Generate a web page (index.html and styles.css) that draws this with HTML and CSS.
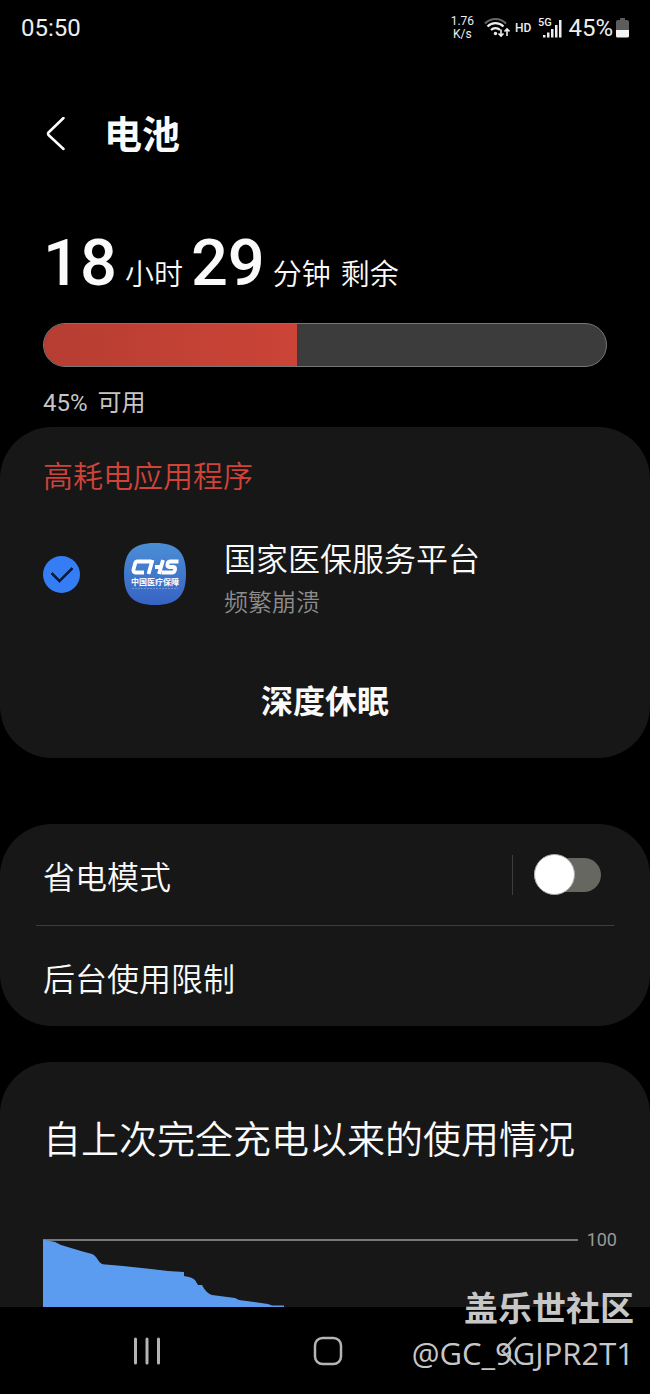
FILE: index.html
```html
<!DOCTYPE html>
<html lang="zh-CN">
<head>
<meta charset="utf-8">
<meta name="viewport" content="width=device-width, initial-scale=1">
<title>电池</title>
<link rel="stylesheet" href="styles.css">
</head>
<body>
<div class="screen">
  <div class="status-bar">
    <span class="clock">05:50</span>
    <div class="status-icons">
      <span class="net-speed"><span>1.76</span><span>K/s</span></span>
      <svg class="wifi" width="26" height="22" viewBox="0 0 26 22" fill="none" stroke="#eee" stroke-width="2.200" aria-hidden="true">
        <path d="M1 6.500C7 .5 16 .5 22 6.500" stroke="#666"/>
        <path d="M3.500 9.500C8 5 15 5 19.500 9.500"/>
        <path d="M7 13C9.500 10.500 13.500 10.500 16 13"/>
        <circle cx="11.500" cy="16.500" r="1.700" fill="#eee" stroke="none"/>
        <path d="M17 12.500v6M14.500 16.500l2.500 2.500 2.500-2.500M23 19v-6M20.500 14.500l2.500-2.500 2.500 2.500" stroke-width="1.600"/>
      </svg>
      <span class="hd">HD</span>
      <svg class="signal" width="25" height="22" viewBox="0 0 25 22" aria-hidden="true">
        <text class="signal-label" x="0" y="9">5G</text>
        <path d="M5 18h2.500v2.500H5zM9 15.500h2.500v5H9zM13 12h2.500v8.500H13zM17 8h2.500v12.500H17zM21 3h2.500v17.500H21z" fill="#eee"/>
      </svg>
      <span class="percent">45%</span>
      <svg class="battery" width="13" height="20" viewBox="0 0 13 20" aria-hidden="true">
        <path d="M4 0h5v2h2q2 0 2 2v8H0V4q0-2 2-2h2z" fill="#5c5c5c"/>
        <path d="M0 12h13v6q0 1.500-1.500 1.500h-10Q0 19.500 0 18z" fill="#f4f4f4"/>
      </svg>
    </div>
  </div>

  <header class="page-header">
    <button class="back" type="button" aria-label="返回">
      <svg width="20" height="36" viewBox="0 0 20 36" fill="none" stroke="#fff" stroke-width="2.500" stroke-linecap="round" stroke-linejoin="round"><path d="M17.500 1 2.500 15.500Q1.500 16.500 2.500 18L17.500 32"/></svg>
    </button>
    <h1>电池</h1>
  </header>

  <main>
    <section class="summary">
      <p class="remaining"><strong>18</strong><span class="unit hours">小时</span><strong>29</strong><span class="unit minutes"><span>分钟</span><span>剩余</span></span></p>
      <div class="level" role="meter" aria-label="电量" aria-valuenow="45" aria-valuemin="0" aria-valuemax="100"><div class="level-fill" style="width:45%"></div></div>
      <p class="available"><span>45%</span><span>可用</span></p>
    </section>

    <section class="card drain">
      <h2 class="drain-title">高耗电应用程序</h2>
      <label class="app">
        <input class="check" type="checkbox" checked>
        <svg class="app-icon" width="64" height="64" viewBox="0 0 64 64" aria-hidden="true">
          <defs><linearGradient id="chs" x1="0" y1="0" x2="0" y2="1"><stop offset="0" stop-color="#4b8ed6"/><stop offset="1" stop-color="#3763c4"/></linearGradient></defs>
          <path d="M32 1C54 1 63 10 63 32S54 63 32 63 1 54 1 32 10 1 32 1z" fill="url(#chs)"/>
          <g fill="none" stroke="#fff" stroke-width="3.800" stroke-linejoin="round">
            <path d="M28 19.500H14.500Q12.500 19.500 12 22L10.500 27.500Q10 30.500 12.500 30.500H21"/>
            <path d="M29.500 18 25.500 32M40 18 36 32M32 25h6"/>
            <path d="M55.500 19.500H47.500Q45 19.500 44.500 22T46 25H50.500Q52.500 25 52 27.700T49.500 30.500H38.500"/>
          </g>
          <text class="app-mark" x="32" y="43" text-anchor="middle">中国医疗保障</text>
          <path d="M9 46.500h46" stroke="#6f97dc" stroke-width="1" stroke-dasharray="2 1"/>
        </svg>
        <span class="app-text"><span class="app-name">国家医保服务平台</span><span class="app-note">频繁崩溃</span></span>
      </label>
      <button class="sleep" type="button">深度休眠</button>
    </section>

    <section class="card modes">
      <div class="row saver">
        <label for="saver">省电模式</label>
        <span class="toggle-wrap"><input class="toggle" id="saver" type="checkbox" role="switch"></span>
      </div>
      <a class="row limits" href="#">后台使用限制</a>
    </section>

    <section class="card usage">
      <h2>自上次完全充电以来的使用情况</h2>
      <div class="chart">
        <svg class="plot" width="100%" height="68" aria-hidden="true">
          <path d="M0 1H2000" stroke="#777" stroke-width="2"/>
          <path d="M0 .5 12 3 18 6 38 12 49 15Q52 16 55 21T63 25.500L80 27 108 30 125 32 141 33V37Q149 38 152 41L155 46H159Q163 54 169 56L192 59 196 61 225 65 229 66.500H241V68H0z" fill="#5b9cf1"/>
        </svg>
        <span class="axis">100</span>
      </div>
    </section>
  </main>

  <nav class="nav-bar">
    <button type="button" aria-label="最近"><svg width="28" height="30" viewBox="0 0 28 30" stroke="#b4b4b4" stroke-width="3" stroke-linecap="round"><path d="M2.500 3v24M14 3v24M25.500 3v24"/></svg></button>
    <button type="button" aria-label="主页"><svg width="30" height="30" viewBox="0 0 30 30" fill="none" stroke="#b4b4b4" stroke-width="2.500"><rect x="2" y="2" width="26" height="26" rx="7.500"/></svg></button>
    <button type="button" aria-label="后退"><svg width="30" height="30" viewBox="0 0 30 30" fill="none" stroke="#b4b4b4" stroke-width="2.500" stroke-linecap="round" stroke-linejoin="round"><path d="M21 2 8.500 15 21 28"/></svg></button>
  </nav>
  <div class="watermark"><strong>盖乐世社区</strong><span>@GC_9GJPR2T1</span></div>
</div>
</body>
</html>
```
FILE: styles.css
```css
* { box-sizing: border-box; }
body {
  margin: 0;
  background: #000;
  color: #fafafa;
  font-family: Roboto, "Noto Sans CJK SC", sans-serif;
}
h1, h2, p { margin: 0; font-weight: 400; }
button { padding: 0; border: 0; background: none; color: inherit; font: inherit; cursor: pointer; }
svg { display: block; flex: none; }

.screen { position: relative; display: flex; flex-direction: column; min-height: 100vh; }

.status-bar { display: flex; align-items: center; justify-content: space-between; height: 56px; padding: 0 21px; color: #eee; }
.clock { font-size: 24px; }
.status-icons { display: flex; align-items: center; }
.net-speed { display: flex; flex-direction: column; align-items: center; margin-right: 10px; font-size: 12px; line-height: 13px; }
.hd { margin: 0 7px 0 5px; font-size: 12px; font-weight: 500; }
.signal-label { font-size: 11px; font-weight: 500; fill: #eee; }
.percent { margin: 0 3px 0 5px; font-size: 24px; }

.page-header { display: flex; align-items: center; gap: 38px; padding: 48px 46px 0; }
h1 { font-size: 38px; line-height: 62px; font-weight: 700; }

.summary { padding: 61px 43px 0; }
.remaining { display: flex; align-items: baseline; line-height: 72px; }
.remaining strong { font-size: 65px; font-weight: 500; }
.unit { font-size: 29px; font-weight: 350; }
.hours { margin: 0 8px; }
.minutes { display: flex; gap: 10px; margin-left: 8px; }
.level { height: 44px; margin-top: 12px; overflow: hidden; border: 1px solid #777; border-radius: 22px; background: #3c3c3c; }
.level-fill { height: 100%; background: linear-gradient(90deg, #b73d32, #cb4437); }
.available { display: flex; gap: 10px; margin-top: 20px; color: #c6c6c6; font-size: 24px; line-height: 32px; }

.card { border-radius: 52px; background: #171717; font-weight: 350; }
.card h2 { font-weight: 350; }
.drain { margin-top: 8px; padding: 28px 43px 32px; }
.drain .drain-title { color: #cf4338; font-size: 30px; line-height: 44px; }
.app { display: flex; align-items: center; margin-top: 26px; }
.check { display: grid; place-items: center; width: 37px; height: 37px; margin: 0 43px 0 0; appearance: none; border: 2px solid #888; border-radius: 50%; }
.check:checked { border: 0; background: #347df4; }
.check:checked::after { content: ""; width: 17px; height: 10px; border: solid #101c35; border-width: 0 0 3px 3px; border-radius: 1px; transform: translateY(-3px) rotate(-45deg); }
.app-mark { fill: #fff; font-size: 8px; font-weight: 700; }
.app-text { display: flex; flex-direction: column; margin-left: 37px; padding-top: 12px; }
.app-name { font-size: 32px; line-height: 46px; }
.app-note { color: #8c8c8c; font-size: 24px; line-height: 40px; }
.sleep { display: block; width: 100%; margin-top: 55px; font-size: 32px; line-height: 48px; font-weight: 700; }

.modes { margin-top: 66px; }
.row { display: flex; align-items: center; justify-content: space-between; margin: 0 36px; padding: 0 7px; font-size: 32px; color: inherit; text-decoration: none; }
.saver { height: 102px; border-bottom: 1px solid #3d3d3d; }
.limits { height: 100px; padding-top: 2px; }
.toggle-wrap { display: flex; align-items: center; height: 40px; padding: 0 6px 0 21px; border-left: 1px solid #3d3d3d; }
.toggle { display: flex; align-items: center; width: 67px; height: 34px; margin: 0; appearance: none; border-radius: 17px; background: #666761; }
.toggle::before { content: ""; width: 39px; height: 39px; flex: none; border: 1px solid #aaa; border-radius: 50%; background: #fff; }
.toggle:checked { justify-content: flex-end; background: #347df4; }

main { flex: 1; }
.usage { margin-top: 36px; padding: 51px 33px 0 43px; border-radius: 52px 52px 0 0; }
.usage h2 { font-size: 38px; line-height: 54px; white-space: nowrap; }
.chart { display: flex; align-items: flex-start; gap: 9px; margin-top: 72px; }
.plot { flex: 1; min-width: 0; overflow: hidden; }
.axis { color: #999; font-size: 18px; font-weight: 400; line-height: 2px; }

.nav-bar { display: grid; grid-template-columns: repeat(3, 1fr); height: 87px; padding: 0 50px 0 56px; background: #000; }
.nav-bar button { display: grid; place-items: center; }
.watermark { position: absolute; right: 16px; bottom: 20px; display: flex; flex-direction: column; align-items: flex-end; color: #c7c7c7; pointer-events: none; }
.watermark strong { font-size: 34px; line-height: 46px; font-weight: 700; }
.watermark span { font-family: "Open Sans", sans-serif; font-size: 31px; line-height: 42px; }
```
